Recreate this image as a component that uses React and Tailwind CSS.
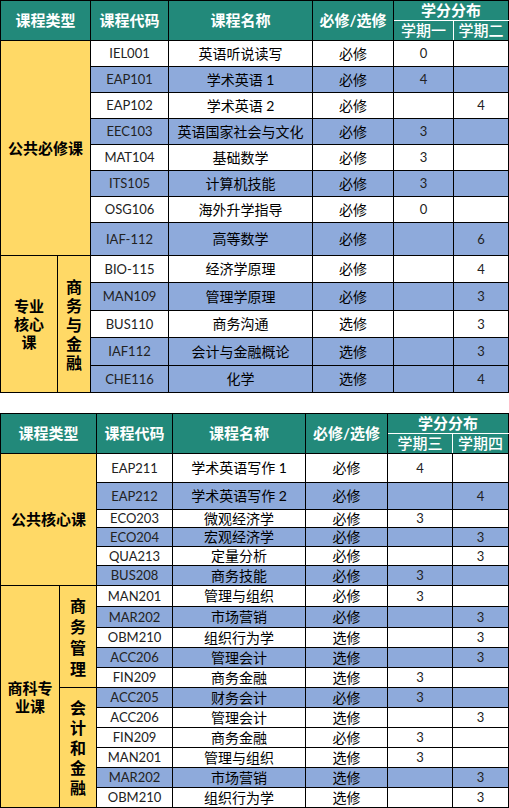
import React from "react";

const FONT = "font-['Lato','Noto_Sans_CJK_SC',sans-serif]";
const TEAL = "bg-[#22897a]";
const GOLD = "bg-[#ffd966]";
const BLUE = "bg-[#8eaadb]";

// [code, name, type, term A, term B, blue row, height]
const table1 = [
  ["IEL001", "英语听说读写", "必修", "0", "", false, 26],
  ["EAP101", "学术英语 1", "必修", "4", "", true, 26],
  ["EAP102", "学术英语 2", "必修", "", "4", false, 26],
  ["EEC103", "英语国家社会与文化", "必修", "3", "", true, 26],
  ["MAT104", "基础数学", "必修", "3", "", false, 26],
  ["ITS105", "计算机技能", "必修", "3", "", true, 26],
  ["OSG106", "海外升学指导", "必修", "0", "", false, 26],
  ["IAF-112", "高等数学", "必修", "", "6", true, 33],
  ["BIO-115", "经济学原理", "必修", "", "4", false, 27],
  ["MAN109", "管理学原理", "必修", "", "3", true, 28],
  ["BUS110", "商务沟通", "选修", "", "3", false, 27],
  ["IAF112", "会计与金融概论", "选修", "", "3", true, 28],
  ["CHE116", "化学", "选修", "", "4", true, 27],
];

const table2 = [
  ["EAP211", "学术英语写作 1", "必修", "4", "", false, 29],
  ["EAP212", "学术英语写作 2", "必修", "", "4", true, 27],
  ["ECO203", "微观经济学", "必修", "3", "", false, 18],
  ["ECO204", "宏观经济学", "必修", "", "3", true, 19],
  ["QUA213", "定量分析", "必修", "", "3", false, 19],
  ["BUS208", "商务技能", "必修", "3", "", true, 20],
  ["MAN201", "管理与组织", "必修", "3", "", false, 21],
  ["MAR202", "市场营销", "必修", "", "3", true, 21],
  ["OBM210", "组织行为学", "选修", "", "3", false, 20],
  ["ACC206", "管理会计", "选修", "", "3", true, 20],
  ["FIN209", "商务金融", "选修", "3", "", false, 20],
  ["ACC205", "财务会计", "必修", "3", "", true, 20],
  ["ACC206", "管理会计", "选修", "", "3", false, 20],
  ["FIN209", "商务金融", "必修", "3", "", false, 20],
  ["MAN201", "管理与组织", "选修", "3", "", false, 20],
  ["MAR202", "市场营销", "选修", "", "3", true, 20],
  ["OBM210", "组织行为学", "选修", "", "3", false, 20],
];

const Stack = ({ lines, leading = "leading-[19px]" }) => (
  <div className={`flex flex-col items-center ${leading}`}>
    {lines.map((l, i) => (
      <span key={i}>{l}</span>
    ))}
  </div>
);

const Header = ({ terms }) => (
  <>
    <tr className="h-[20px]">
      <th colSpan={2} rowSpan={2} className={`${TEAL} border border-black text-white text-[15px] font-bold`}>
        课程类型
      </th>
      <th rowSpan={2} className={`${TEAL} border border-black text-white text-[15px] font-bold`}>
        课程代码
      </th>
      <th rowSpan={2} className={`${TEAL} border border-black text-white text-[15px] font-bold`}>
        课程名称
      </th>
      <th rowSpan={2} className={`${TEAL} border border-black text-white text-[15px] font-bold`}>
        必修/选修
      </th>
      <th colSpan={2} className={`${TEAL} border border-black border-b-white text-white text-[15px] font-bold leading-none`}>
        学分分布
      </th>
    </tr>
    <tr className="h-[20px]">
      <th className={`${TEAL} border border-black border-r-white text-white text-[15px] font-medium leading-none`}>
        {terms[0]}
      </th>
      <th className={`${TEAL} border border-black text-white text-[15px] font-medium leading-none`}>
        {terms[1]}
      </th>
    </tr>
  </>
);

const Row = ({ r, lead }) => {
  const bg = r[5] ? BLUE : "bg-white";
  const cell = `${bg} border border-black text-center`;
  return (
    <tr style={{ height: r[6] }}>
      {lead}
      <td className={`${cell} text-[13px] text-[#222]`}>{r[0]}</td>
      <td className={`${cell} text-[14px]`}>{r[1]}</td>
      <td className={`${cell} text-[14px]`}>{r[2]}</td>
      <td className={`${cell} text-[13px] text-[#222]`}>{r[3]}</td>
      <td className={`${cell} text-[13px] text-[#222]`}>{r[4]}</td>
    </tr>
  );
};

const gold = `${GOLD} border border-black text-center font-bold text-black`;

export default function App() {
  return (
    <div className={`w-[509px] bg-white ${FONT} text-black`}>
      <table className="table-fixed border-collapse w-[508px] leading-none">
        <colgroup>
          <col className="w-[57px]" />
          <col className="w-[33px]" />
          <col className="w-[78px]" />
          <col className="w-[144px]" />
          <col className="w-[81px]" />
          <col className="w-[60px]" />
          <col className="w-[55px]" />
        </colgroup>
        <tbody>
          <Header terms={["学期一", "学期二"]} />
          {table1.map((r, i) => {
            let lead = null;
            if (i === 0)
              lead = (
                <td colSpan={2} rowSpan={8} className={`${gold} text-[15px]`}>
                  公共必修课
                </td>
              );
            if (i === 8)
              lead = (
                <>
                  <td rowSpan={5} className={`${gold} text-[15px]`}>
                    <Stack lines={["专业", "核心", "课"]} leading="leading-[18px]" />
                  </td>
                  <td rowSpan={5} className={`${gold} text-[16px]`}>
                    <Stack lines={["商", "务", "与", "金", "融"]} />
                  </td>
                </>
              );
            return <Row key={i} r={r} lead={lead} />;
          })}
        </tbody>
      </table>

      <div className="h-[20px]" />

      <table className="table-fixed border-collapse w-[508px] leading-none">
        <colgroup>
          <col className="w-[59px]" />
          <col className="w-[37px]" />
          <col className="w-[76px]" />
          <col className="w-[133px]" />
          <col className="w-[82px]" />
          <col className="w-[65px]" />
          <col className="w-[56px]" />
        </colgroup>
        <tbody>
          <Header terms={["学期三", "学期四"]} />
          {table2.map((r, i) => {
            let lead = null;
            if (i === 0)
              lead = (
                <td colSpan={2} rowSpan={6} className={`${gold} text-[15px]`}>
                  公共核心课
                </td>
              );
            if (i === 6)
              lead = (
                <>
                  <td rowSpan={11} className={`${gold} text-[15px]`}>
                    <Stack lines={["商科专", "业课"]} leading="leading-[18px]" />
                  </td>
                  <td rowSpan={5} className={`${gold} text-[16px]`}>
                    <Stack lines={["商", "务", "管", "理"]} leading="leading-[21px]" />
                  </td>
                </>
              );
            if (i === 11)
              lead = (
                <td rowSpan={6} className={`${gold} text-[16px]`}>
                  <Stack lines={["会", "计", "和", "金", "融"]} leading="leading-[20px]" />
                </td>
              );
            return <Row key={i} r={r} lead={lead} />;
          })}
        </tbody>
      </table>
    </div>
  );
}
